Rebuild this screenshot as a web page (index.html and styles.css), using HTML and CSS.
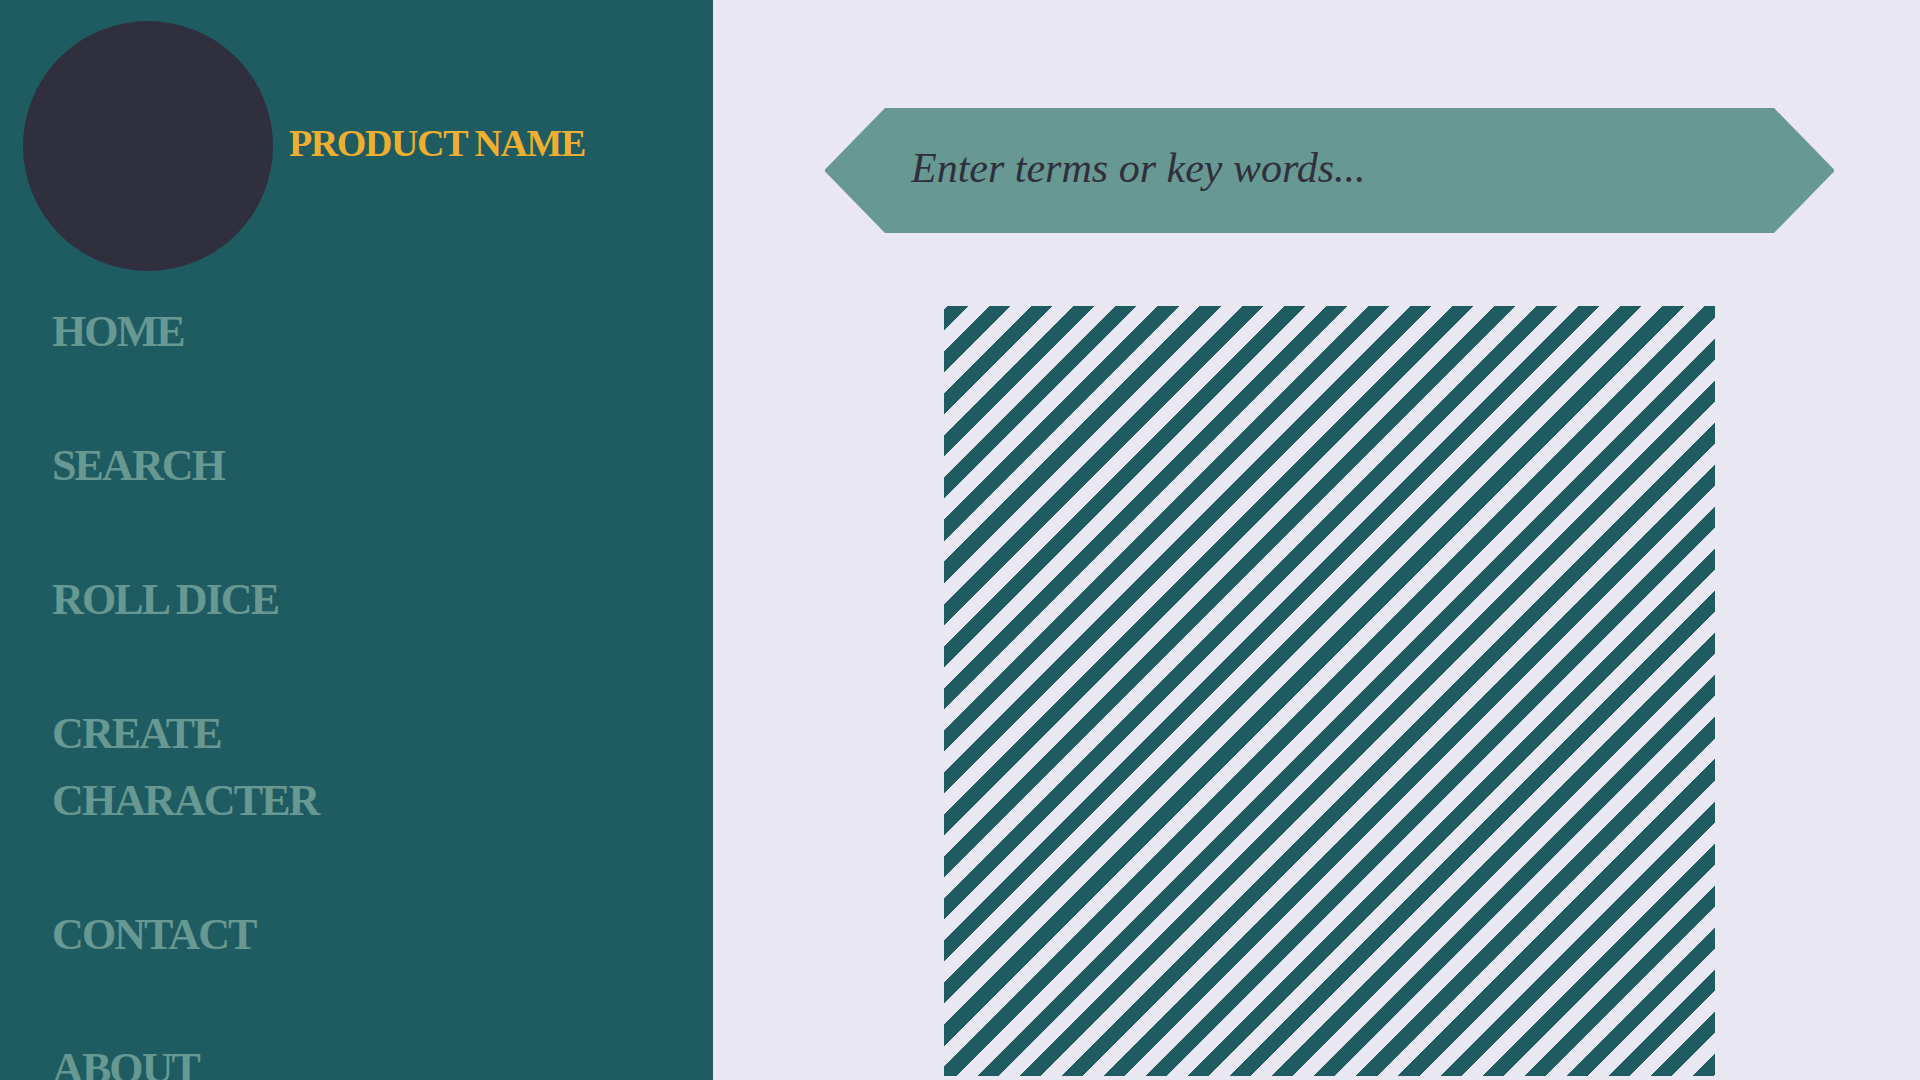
FILE: index.html
```html
<!DOCTYPE html>
<html>
<head>
  <title>Product Name</title>
  <link rel="stylesheet" href="styles.css">
</head>
<body>
  <aside class="sidebar">
    <div class="brand">
      <div class="brand-logo"></div>
      <span class="brand-name">PRODUCT NAME</span>
    </div>
    <nav class="nav">
      <a class="nav-link" href="#">HOME</a>
      <a class="nav-link" href="#">SEARCH</a>
      <a class="nav-link" href="#">ROLL DICE</a>
      <a class="nav-link" href="#">CREATE<br>CHARACTER</a>
      <a class="nav-link" href="#">CONTACT</a>
      <a class="nav-link" href="#">ABOUT</a>
    </nav>
  </aside>

  <main class="content">
    <div class="search">
      <input class="search-input" type="text" placeholder="Enter terms or key words...">
    </div>
    <div class="placeholder-image"></div>
  </main>
</body>
</html>
```

FILE: styles.css
```css
html, body {
  height: 100%;
}

body {
  margin: 0;
  display: flex;
  height: 100vh;
  overflow: hidden;
  background-color: #e9e7f1;
  font-family: "Liberation Serif", serif;
}

.sidebar {
  width: 713px;
  flex-shrink: 0;
  box-sizing: border-box;
  padding: 21px 0 0 23px;
  background-color: #1f5c61;
}

.brand {
  display: flex;
  align-items: center;
  gap: 16px;
}

.brand-logo {
  width: 250px;
  height: 250px;
  border-radius: 50%;
  background-color: #2f2f3e;
}

.brand-name {
  padding-bottom: 6px;
  color: #eeaf30;
  font-size: 38px;
  font-weight: bold;
  letter-spacing: -1.4px;
  white-space: nowrap;
}

.nav {
  display: flex;
  flex-direction: column;
  gap: 67px;
  margin-top: 27px;
  padding-left: 29px;
}

.nav-link {
  color: #689892;
  font-size: 44px;
  font-weight: bold;
  letter-spacing: -1.9px;
  line-height: 67px;
  text-decoration: none;
}

.content {
  flex: 1;
  display: flex;
  flex-direction: column;
  box-sizing: border-box;
  padding: 108px 85px 0 111px;
}

.search {
  height: 125px;
  flex-shrink: 0;
  background-color: #689892;
  clip-path: polygon(61px 0, calc(100% - 61px) 0, calc(100% - 1px) calc(50% - 1px), calc(100% - 1px) calc(50% + 1px), calc(100% - 61px) 100%, 61px 100%, 1px calc(50% + 1px), 1px calc(50% - 1px));
}

.search-input {
  width: 100%;
  height: 100%;
  box-sizing: border-box;
  padding: 0 87px 6px;
  border: none;
  outline: none;
  background: transparent;
  color: #2f2f3e;
  font-family: "Liberation Serif", serif;
  font-size: 42px;
  font-style: italic;
}

.search-input::placeholder {
  color: #2f2f3e;
  opacity: 1;
}

.placeholder-image {
  width: 771px;
  height: 770px;
  flex-shrink: 0;
  margin: 73px auto 0;
  background-image: repeating-linear-gradient(135deg,
    #1f5c61 2.4px, #1f5c61 17.4px,
    #e9e7f1 17.4px, #e9e7f1 32.16px);
}
```
